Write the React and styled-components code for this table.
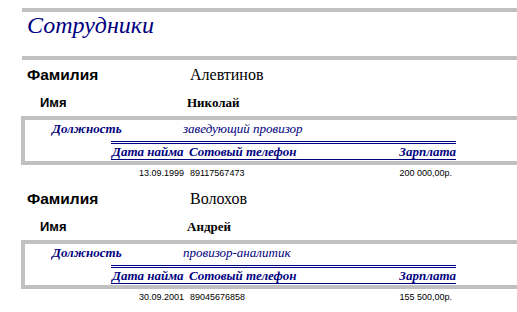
import React from "react";
import styled, { createGlobalStyle } from "styled-components";

const Global = createGlobalStyle`
  html, body { margin: 0; padding: 0; background: #fff; }
  body { overflow: hidden; }
`;

const Page = styled.div`
  width: 517px;
  height: 312px;
  padding-top: 8px;
  box-sizing: border-box;
  overflow: hidden;
`;

const Bar = styled.div`
  height: 4px;
  margin-left: 22px;
  background: #c0c0c0;
`;

const Title = styled.h1`
  margin: 0;
  height: 44px;
  box-sizing: border-box;
  padding: 1px 0 0 27px;
  line-height: 24px;
  font-family: "Liberation Serif", serif;
  font-style: italic;
  font-weight: normal;
  font-size: 24px;
  color: #000080;
`;

const Record = styled.section`
  margin-bottom: 3px;
`;

const FieldRow = styled.div`
  display: grid;
  grid-template-columns: ${(p) => p.$labelX}px ${(p) => p.$valueX - p.$labelX}px 1fr;
  height: ${(p) => p.$h}px;
  align-items: center;
`;

const FieldLabel = styled.div`
  grid-column: 2;
  font-family: "Liberation Sans", Arial, sans-serif;
  font-weight: bold;
  font-size: ${(p) => p.$size}px;
  color: #000;
`;

const FieldValue = styled.div`
  grid-column: 3;
  font-family: "Liberation Serif", serif;
  font-weight: ${(p) => (p.$bold ? "bold" : "normal")};
  font-size: ${(p) => p.$size}px;
  color: #000;
`;

const Box = styled.div`
  margin-top: 1px;
  margin-left: 21px;
  margin-right: -10px;
  border: 4px solid #c0c0c0;
  border-right: none;
  padding-bottom: 1px;
`;

const PositionRow = styled.div`
  display: grid;
  grid-template-columns: 27px 131px 1fr;
  height: 17px;
  align-items: center;
  font-family: "Liberation Serif", serif;
  font-style: italic;
  color: #000080;
`;

const PositionLabel = styled.div`
  grid-column: 2;
  font-weight: bold;
  font-size: 13px;
`;

const PositionValue = styled.div`
  grid-column: 3;
  font-size: 13px;
`;

const TableHead = styled.div`
  margin-top: 4px;
  margin-left: 86px;
  width: 345px;
  border-top: 3px double #000080;
  border-bottom: 1px solid #000080;
  display: grid;
  grid-template-columns: 77px 1fr auto;
  height: 15px;
  align-items: center;
  font-family: "Liberation Serif", serif;
  font-style: italic;
  font-weight: bold;
  font-size: 13px;
  color: #000080;
`;

const HeadCell = styled.div`
  padding: 0 ${(p) => (p.$right ? "0" : "1px")};
  text-align: ${(p) => (p.$right ? "right" : "left")};
  white-space: nowrap;
`;

const DataRow = styled.div`
  margin-left: 111px;
  width: 345px;
  display: grid;
  grid-template-columns: 76px 1fr auto;
  height: 16px;
  align-items: center;
  font-family: "Liberation Sans", Arial, sans-serif;
  font-size: 9px;
  color: #000;
`;

const DataCell = styled.div`
  text-align: ${(p) => p.$align};
  padding: ${(p) => p.$pad};
  white-space: nowrap;
`;

const employees = [
  {
    last: "Алевтинов",
    first: "Николай",
    position: "заведующий провизор",
    hired: "13.09.1999",
    phone: "89117567473",
    salary: "200 000,00р.",
  },
  {
    last: "Волохов",
    first: "Андрей",
    position: "провизор-аналитик",
    hired: "30.09.2001",
    phone: "89045676858",
    salary: "155 500,00р.",
  },
];

export default function App() {
  return (
    <Page>
      <Global />
      <Bar />
      <Title>Сотрудники</Title>
      <Bar />
      {employees.map((e) => (
        <Record key={e.last}>
          <FieldRow $labelX={27} $valueX={190} $h={30}>
            <FieldLabel $size={15.5}>Фамилия</FieldLabel>
            <FieldValue $size={16}>{e.last}</FieldValue>
          </FieldRow>
          <FieldRow $labelX={40} $valueX={187} $h={25}>
            <FieldLabel $size={13}>Имя</FieldLabel>
            <FieldValue $size={13} $bold>{e.first}</FieldValue>
          </FieldRow>
          <Box>
            <PositionRow>
              <PositionLabel>Должность</PositionLabel>
              <PositionValue>{e.position}</PositionValue>
            </PositionRow>
            <TableHead>
              <HeadCell>Дата найма</HeadCell>
              <HeadCell>Сотовый телефон</HeadCell>
              <HeadCell $right>Зарплата</HeadCell>
            </TableHead>
          </Box>
          <DataRow>
            <DataCell $align="right" $pad="0 3px 0 0">{e.hired}</DataCell>
            <DataCell $align="left" $pad="0 0 0 3px">{e.phone}</DataCell>
            <DataCell $align="right" $pad="0 4px 0 0">{e.salary}</DataCell>
          </DataRow>
        </Record>
      ))}
    </Page>
  );
}
